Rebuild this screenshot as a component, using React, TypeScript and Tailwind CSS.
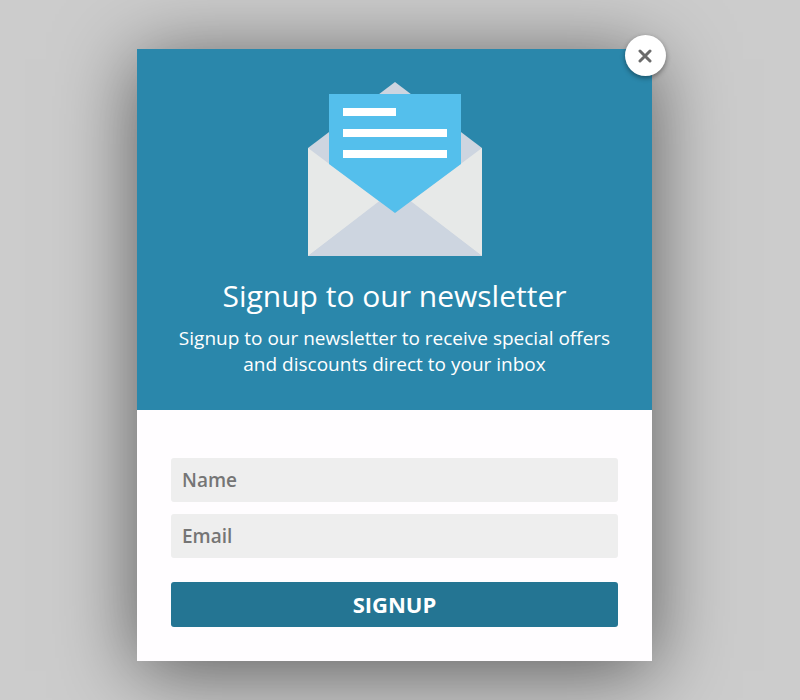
import { useState } from "react";
import type { FormEvent } from "react";

function EnvelopeIcon() {
  return (
    <svg className="block h-[174px] w-[174px]" viewBox="0 0 174 174" aria-hidden="true">
      <path d="M87 0 174 66V174H0V66Z" fill="#cdd5e0" />
      <path d="M0 66 87 131 174 66V174L104 121H70L0 174Z" fill="#e7e9e8" />
      <path d="M0 174 87 107 174 174Z" fill="#cdd5e0" />
      <path d="M21 12H153V82L87 131 21 82Z" fill="#54bfec" />
      <path d="M35 26H88V34H35ZM35 47H139V55H35ZM35 68H139V76H35Z" fill="#fff" />
    </svg>
  );
}

type FieldProps = {
  label: string;
  type: string;
  value: string;
  onChange: (value: string) => void;
};

function Field({ label, type, value, onChange }: FieldProps) {
  return (
    <input
      type={type}
      aria-label={label}
      placeholder={label}
      value={value}
      onChange={(event) => onChange(event.target.value)}
      className="block h-11 w-full rounded-[3px] bg-[#eeeeee] px-[11px] text-[19px] font-semibold text-[#757575] outline-none placeholder:text-[#757575]"
    />
  );
}

export default function App() {
  const [open, setOpen] = useState(true);
  const [name, setName] = useState("");
  const [email, setEmail] = useState("");

  const submit = (event: FormEvent) => event.preventDefault();

  return (
    <main className="flex min-h-screen items-start justify-center overflow-hidden bg-[#cccccc] pt-[49px] pr-[11px] pb-[39px] font-['Open_Sans',sans-serif]">
      {open && (
        <section
          role="dialog"
          aria-labelledby="signup-title"
          className="relative w-full max-w-[515px] bg-[#fffdff] shadow-[0_10px_75px_rgba(0,0,0,0.56)]"
        >
          <button
            type="button"
            aria-label="Close"
            onClick={() => setOpen(false)}
            className="absolute -top-3.5 -right-3.5 flex size-[41px] items-center justify-center rounded-full bg-white shadow-[0_2px_5px_rgba(0,0,0,0.4)]"
          >
            <svg className="size-[15px]" viewBox="0 0 15 15" aria-hidden="true">
              <path d="M2 3 12 13M12 3 2 13" stroke="#6b6b6b" strokeWidth="3" strokeLinecap="round" />
            </svg>
          </button>
          <header className="flex flex-col items-center bg-[#2a87ab] px-8 pt-[33px] pb-[33px] text-center text-white">
            <EnvelopeIcon />
            <h1 id="signup-title" className="mt-[19px] text-[30px] leading-[42px]">
              Signup to our newsletter
            </h1>
            <p className="mt-2 text-[19px] leading-[26px]">
              Signup to our newsletter to receive special offers and discounts direct to your inbox
            </p>
          </header>
          <form onSubmit={submit} className="flex flex-col px-[34px] pt-12 pb-[34px]">
            <div className="flex flex-col gap-3">
              <Field label="Name" type="text" value={name} onChange={setName} />
              <Field label="Email" type="email" value={email} onChange={setEmail} />
            </div>
            <button
              type="submit"
              className="mt-6 h-[45px] rounded-[3px] bg-[#247593] text-[22px] font-bold text-white"
            >
              SIGNUP
            </button>
          </form>
        </section>
      )}
    </main>
  );
}
